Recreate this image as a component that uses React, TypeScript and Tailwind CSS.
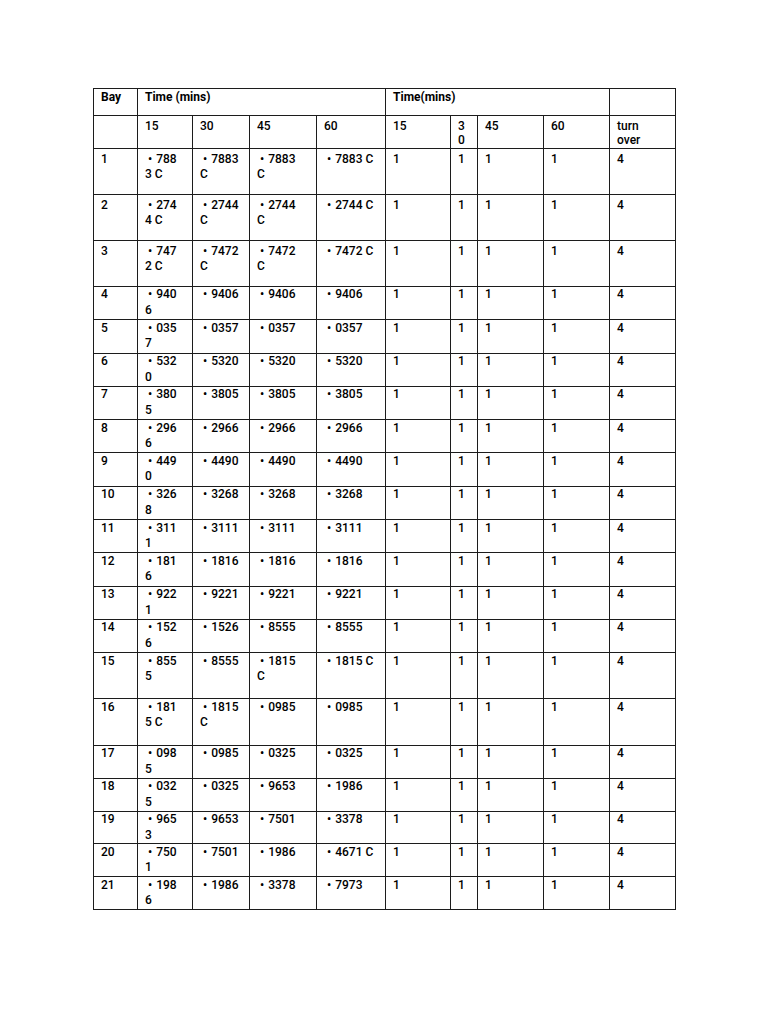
import React from "react";

type Row = {
  bay: string;
  h: string;
  tall?: boolean;
  times: string[][];
};

// each time cell is the list of its printed lines (the first one carries the bullet)
const rows: Row[] = [
  { bay: "1", h: "h-[46px]", tall: true, times: [["788", "3 C"], ["7883", "C"], ["7883", "C"], ["7883 C"]] },
  { bay: "2", h: "h-[46px]", tall: true, times: [["274", "4 C"], ["2744", "C"], ["2744", "C"], ["2744 C"]] },
  { bay: "3", h: "h-[46.3px]", tall: true, times: [["747", "2 C"], ["7472", "C"], ["7472", "C"], ["7472 C"]] },
  { bay: "4", h: "h-[33.3px]", times: [["940", "6"], ["9406"], ["9406"], ["9406"]] },
  { bay: "5", h: "h-[33.3px]", times: [["035", "7"], ["0357"], ["0357"], ["0357"]] },
  { bay: "6", h: "h-[33.3px]", times: [["532", "0"], ["5320"], ["5320"], ["5320"]] },
  { bay: "7", h: "h-[33.3px]", times: [["380", "5"], ["3805"], ["3805"], ["3805"]] },
  { bay: "8", h: "h-[33.3px]", times: [["296", "6"], ["2966"], ["2966"], ["2966"]] },
  { bay: "9", h: "h-[33.3px]", times: [["449", "0"], ["4490"], ["4490"], ["4490"]] },
  { bay: "10", h: "h-[33.3px]", times: [["326", "8"], ["3268"], ["3268"], ["3268"]] },
  { bay: "11", h: "h-[33.3px]", times: [["311", "1"], ["3111"], ["3111"], ["3111"]] },
  { bay: "12", h: "h-[33.3px]", times: [["181", "6"], ["1816"], ["1816"], ["1816"]] },
  { bay: "13", h: "h-[33.3px]", times: [["922", "1"], ["9221"], ["9221"], ["9221"]] },
  { bay: "14", h: "h-[33.3px]", times: [["152", "6"], ["1526"], ["8555"], ["8555"]] },
  { bay: "15", h: "h-[46px]", times: [["855", "5"], ["8555"], ["1815", "C"], ["1815 C"]] },
  { bay: "16", h: "h-[46.5px]", times: [["181", "5 C"], ["1815", "C"], ["0985"], ["0985"]] },
  { bay: "17", h: "h-[32.9px]", times: [["098", "5"], ["0985"], ["0325"], ["0325"]] },
  { bay: "18", h: "h-[32.9px]", times: [["032", "5"], ["0325"], ["9653"], ["1986"]] },
  { bay: "19", h: "h-[32.9px]", times: [["965", "3"], ["9653"], ["7501"], ["3378"]] },
  { bay: "20", h: "h-[32.9px]", times: [["750", "1"], ["7501"], ["1986"], ["4671 C"]] },
  { bay: "21", h: "h-[32.9px]", times: [["198", "6"], ["1986"], ["3378"], ["7973"]] },
];

const base = "border border-[#1c1c1c] align-top pl-[7px] pr-[2px] pb-0 text-left";
const cell = `${base} pt-[0.5px]`;
const tallCell = `${base} pt-[3px]`;
const headCell = `${base} pt-[3px] leading-[14px] font-medium`;

function Bullet({ lines, cls }: { lines: string[]; cls: string }) {
  return (
    <td className={cls}>
      <div>
        <span className="ml-[3px] mr-[4px]">•</span>
        {lines[0]}
      </div>
      {lines.slice(1).map((line, i) => (
        <div key={i}>{line}</div>
      ))}
    </td>
  );
}

export default function App() {
  return (
    <div
      className="min-h-screen bg-white pt-[88px] pl-[93px] text-[12px] leading-[15.5px] font-medium text-black"
      style={{ fontFamily: "Roboto, 'Liberation Sans', sans-serif" }}
    >
      <table className="table-fixed border-collapse w-[582px]">
        <colgroup>
          <col className="w-[44px]" />
          <col className="w-[55px]" />
          <col className="w-[57px]" />
          <col className="w-[67px]" />
          <col className="w-[69px]" />
          <col className="w-[65px]" />
          <col className="w-[27px]" />
          <col className="w-[66px]" />
          <col className="w-[66px]" />
          <col className="w-[66px]" />
        </colgroup>
        <thead>
          <tr className="h-[26.7px]">
            <th className={`${base} pt-[1px] font-bold`}>Bay</th>
            <th colSpan={4} className={`${base} pt-[1px] font-bold`}>
              Time (mins)
            </th>
            <th colSpan={4} className={`${base} pt-[1px] font-bold`}>
              Time(mins)
            </th>
            <th className={base}></th>
          </tr>
          <tr className="h-[33px]">
            <th className={headCell}></th>
            <th className={headCell}>15</th>
            <th className={headCell}>30</th>
            <th className={headCell}>45</th>
            <th className={headCell}>60</th>
            <th className={headCell}>15</th>
            <th className={headCell}>
              <div>3</div>
              <div>0</div>
            </th>
            <th className={headCell}>45</th>
            <th className={headCell}>60</th>
            <th className={headCell}>
              <div>turn</div>
              <div>over</div>
            </th>
          </tr>
        </thead>
        <tbody>
          {rows.map((row) => {
            const cls = row.tall ? tallCell : cell;
            return (
              <tr key={row.bay} className={row.h}>
                <td className={cls}>{row.bay}</td>
                {row.times.map((lines, i) => (
                  <Bullet key={i} lines={lines} cls={cls} />
                ))}
                <td className={cls}>1</td>
                <td className={cls}>1</td>
                <td className={cls}>1</td>
                <td className={cls}>1</td>
                <td className={cls}>4</td>
              </tr>
            );
          })}
        </tbody>
      </table>
    </div>
  );
}
